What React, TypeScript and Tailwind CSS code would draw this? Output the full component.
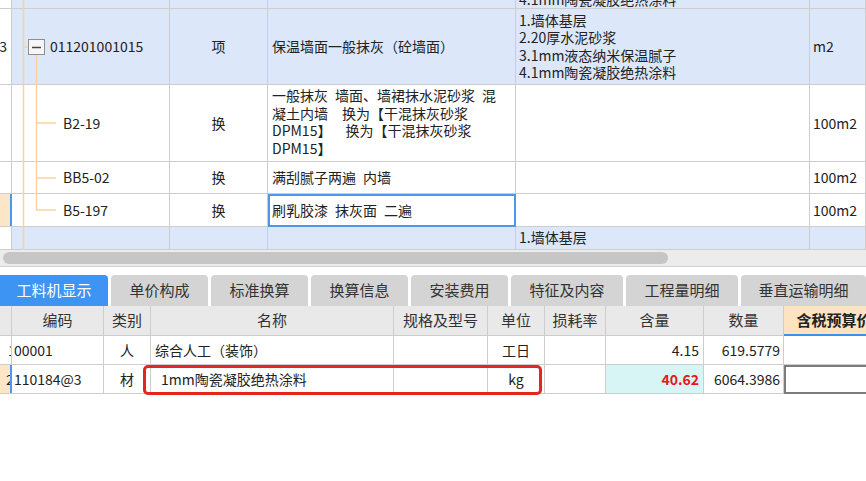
import React from "react";

const upperRow = "grid grid-cols-[12px_158px_98px_248px_294px_56px] border-b border-[#cdcdcd]";
const lowerRow = "grid grid-cols-[12px_92px_47px_243px_94px_57px_61px_98px_80px_100px] border-b border-[#cdcdcd]";
const cell = "border-r border-[#cdcdcd] flex items-center overflow-hidden";

const TreeLines = () => (
  <svg className="absolute left-0 top-0 pointer-events-none" width="170" height="250">
    <line x1="23.5" y1="0" x2="23.5" y2="250" stroke="#fbd29c" strokeWidth="1.5" />
    <line x1="23" y1="47" x2="28" y2="47" stroke="#fbd29c" strokeWidth="1.5" />
    <line x1="36.5" y1="55" x2="36.5" y2="210" stroke="#fbd29c" strokeWidth="1.5" />
    <line x1="36" y1="123" x2="56" y2="123" stroke="#fbd29c" strokeWidth="1.5" />
    <line x1="36" y1="178" x2="56" y2="178" stroke="#fbd29c" strokeWidth="1.5" />
    <line x1="36" y1="210" x2="56" y2="210" stroke="#fbd29c" strokeWidth="1.5" />
    <rect x="28.5" y="39.5" width="16" height="15" fill="#f6f6f6" stroke="#8f8f8f" />
    <line x1="32" y1="47.5" x2="41" y2="47.5" stroke="#444" strokeWidth="1.5" />
  </svg>
);

const tabs = [
  { label: "工料机显示", w: "w-[108px]", active: true },
  { label: "单价构成", w: "w-[97px]" },
  { label: "标准换算", w: "w-[97px]" },
  { label: "换算信息", w: "w-[97px]" },
  { label: "安装费用", w: "w-[97px]" },
  { label: "特征及内容", w: "w-[112px]" },
  { label: "工程量明细", w: "w-[112px]" },
  { label: "垂直运输明细", w: "w-[125px]" },
];

const App = () => {
  return (
    <div className="w-[866px] h-[481px] overflow-hidden bg-white text-[#222] font-['Noto_Sans_CJK_SC',sans-serif]">
      {/* upper grid */}
      <div className="relative h-[250px] overflow-hidden text-[14px]">
        <div className={`${upperRow} h-[9px] bg-[#dce8fa]`}>
          <div className={`${cell} bg-white`} />
          <div className={cell} />
          <div className={cell} />
          <div className={cell} />
          <div className={`${cell} items-end pl-[3px] leading-[17px] whitespace-nowrap`}>4.1mm陶瓷凝胶绝热涂料</div>
          <div className={cell} />
        </div>
        <div className={`${upperRow} h-[76px] bg-[#dce8fa]`}>
          <div className={`${cell} bg-white justify-end`}>
            <span className="mr-[4px]">3</span>
          </div>
          <div className={`${cell} pl-[38px]`}>011201001015</div>
          <div className={`${cell} justify-center`}>项</div>
          <div className={`${cell} pl-[4px]`}>保温墙面一般抹灰（砼墙面）</div>
          <div className={`${cell} pl-[3px] leading-[17.5px]`}>
            <div>
              1.墙体基层
              <br />
              2.20厚水泥砂浆
              <br />
              3.1mm液态纳米保温腻子
              <br />
              4.1mm陶瓷凝胶绝热涂料
            </div>
          </div>
          <div className={`${cell} pl-[3px]`}>m2</div>
        </div>
        <div className={`${upperRow} h-[77px]`}>
          <div className={cell} />
          <div className={`${cell} pl-[51px]`}>B2-19</div>
          <div className={`${cell} justify-center`}>换</div>
          <div className={`${cell} items-start pl-[4px] pt-[2px] leading-[17.5px] whitespace-pre`}>
            <div>
              {"一般抹灰\u2002墙面、墙裙抹水泥砂浆\u2002混"}
              <br />
              {"凝土内墙\u2002\u2002换为【干混抹灰砂浆"}
              <br />
              {"DPM15】\u2002\u2002换为【干混抹灰砂浆"}
              <br />
              {"DPM15】"}
            </div>
          </div>
          <div className={cell} />
          <div className={`${cell} pl-[3px]`}>100m2</div>
        </div>
        <div className={`${upperRow} h-[32px]`}>
          <div className={cell} />
          <div className={`${cell} pl-[51px]`}>BB5-02</div>
          <div className={`${cell} justify-center`}>换</div>
          <div className={`${cell} pl-[4px] whitespace-pre`}>{"满刮腻子两遍\u2002内墙"}</div>
          <div className={cell} />
          <div className={`${cell} pl-[3px]`}>100m2</div>
        </div>
        <div className={`${upperRow} h-[33px]`}>
          <div className="flex bg-[#fde6c8] border-r-2 border-[#4a98ee]" />
          <div className={`${cell} pl-[51px]`}>B5-197</div>
          <div className={`${cell} justify-center`}>换</div>
          <div className="flex items-center pl-[2px] border-2 border-[#4a98ee] bg-white -mb-px whitespace-pre">
            {"刷乳胶漆\u2002抹灰面\u2002二遍"}
          </div>
          <div className={cell} />
          <div className={`${cell} pl-[3px]`}>100m2</div>
        </div>
        <div className={`${upperRow} h-[23px] bg-[#dce8fa]`}>
          <div className={`${cell} bg-white`} />
          <div className={cell} />
          <div className={cell} />
          <div className={cell} />
          <div className={`${cell} items-start pl-[3px] pt-[2px] leading-[17.5px]`}>
            <div>
              1.墙体基层
              <br />
              2.20厚水泥砂浆
            </div>
          </div>
          <div className={cell} />
        </div>
        <TreeLines />
      </div>

      {/* horizontal scrollbar */}
      <div className="h-[17px] bg-[#ececec] pt-[2px] pl-[3px] border-b border-[#cfcfcf]">
        <div className="w-[665px] h-[12px] rounded-full bg-[#c6c6c6]" />
      </div>
      <div className="h-[8px]" />

      {/* tabs */}
      <div className="flex gap-[3px] h-[31px] text-[15px]">
        {tabs.map((t) => (
          <div
            key={t.label}
            className={`${t.w} shrink-0 flex items-center justify-center rounded-t-[4px] ${
              t.active ? "bg-[#3d94f2] text-white rounded-tl-none" : "bg-[#d4d4d4] text-[#333]"
            }`}
          >
            {t.label}
          </div>
        ))}
      </div>

      {/* lower grid */}
      <div className="text-[14px]">
        <div className={`${lowerRow} h-[30px] bg-[#e9e9e9] text-[15px] text-[#333]`}>
          <div className={cell} />
          <div className={`${cell} justify-center`}>编码</div>
          <div className={`${cell} justify-center`}>类别</div>
          <div className={`${cell} justify-center`}>名称</div>
          <div className={`${cell} justify-center`}>规格及型号</div>
          <div className={`${cell} justify-center`}>单位</div>
          <div className={`${cell} justify-center`}>损耗率</div>
          <div className={`${cell} justify-center`}>含量</div>
          <div className={`${cell} justify-center`}>数量</div>
          <div className="flex items-center justify-center bg-[#fde4c1] font-bold text-[#222] border-b-2 border-[#3d8ff0] -mb-px">
            含税预算价
          </div>
        </div>
        <div className={`${lowerRow} h-[29px]`}>
          <div className={`${cell} relative`}>
            <span className="absolute left-[8px]">1</span>
          </div>
          <div className={`${cell} pl-[2px]`}>00001</div>
          <div className={`${cell} justify-center`}>人</div>
          <div className={`${cell} pl-[4px]`}>综合人工（装饰）</div>
          <div className={cell} />
          <div className={`${cell} justify-center`}>工日</div>
          <div className={cell} />
          <div className={`${cell} justify-end pr-[4px]`}>4.15</div>
          <div className={`${cell} justify-end pr-[3px]`}>619.5779</div>
          <div className={cell} />
        </div>
        <div className={`${lowerRow} relative h-[29px]`}>
          <div className="relative flex items-center overflow-hidden bg-[#fde6c8] border-r-2 border-[#4a98ee]">
            <span className="absolute left-[6px]">2</span>
          </div>
          <div className={`${cell} pl-[2px]`}>110184@3</div>
          <div className={`${cell} justify-center`}>材</div>
          <div className={`${cell} pl-[10px]`}>1mm陶瓷凝胶绝热涂料</div>
          <div className={cell} />
          <div className={`${cell} justify-center`}>kg</div>
          <div className={cell} />
          <div className={`${cell} justify-end pr-[4px] bg-[#d8f5f5] text-[#e8161b] font-bold`}>40.62</div>
          <div className={`${cell} justify-end pr-[3px]`}>6064.3986</div>
          <div className="border-2 border-[#7c7c7c] -mb-px" />
          <div className="absolute left-[143px] top-0 w-[399px] h-[30px] rounded-[5px] border-[3px] border-[#e4261e] pointer-events-none" />
        </div>
      </div>
    </div>
  );
};

export default App;
